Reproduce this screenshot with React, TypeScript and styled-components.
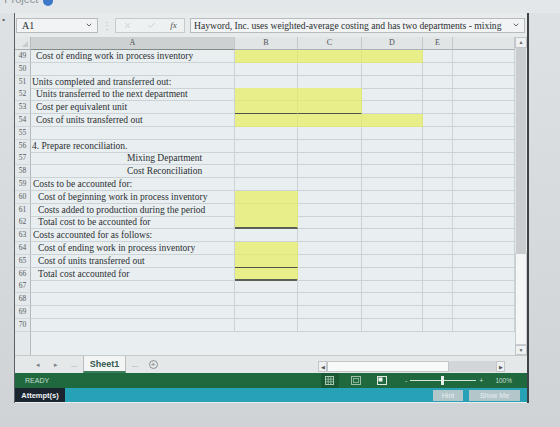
import React from "react";
import styled, { createGlobalStyle } from "styled-components";
import { ChevronDown, X, Check } from "lucide-react";

const GlobalStyle = createGlobalStyle`
  html, body { margin: 0; padding: 0; }
  body {
    background: #d5d8db;
    font-family: "Liberation Serif", "Times New Roman", serif;
  }
  * { box-sizing: border-box; }
`;

// widths of: row numbers, A, B, C, D, E, (unlabelled)
const COLS = "16px 204px 63px 64px 61px 30px 62px";
const LETTERS = ["A", "B", "C", "D", "E", ""];

type Under = "single" | "double";

type RowData = {
  n: number;
  text?: string;
  indent?: number;
  fill?: string[];
  under?: Record<string, Under>;
};

const rows: RowData[] = [
  { n: 49, text: "Cost of ending work in process inventory", indent: 4, fill: ["B", "C", "D"] },
  { n: 50 },
  { n: 51, text: "Units completed and transferred out:", indent: 0 },
  { n: 52, text: "Units transferred to the next department", indent: 4, fill: ["B", "C"] },
  { n: 53, text: "Cost per equivalent unit", indent: 4, fill: ["B", "C"], under: { B: "single", C: "single" } },
  { n: 54, text: "Cost of units transferred out", indent: 4, fill: ["B", "C", "D"] },
  { n: 55 },
  { n: 56, text: "4. Prepare reconciliation.", indent: 0 },
  { n: 57, text: "Mixing Department", indent: 95 },
  { n: 58, text: "Cost Reconciliation", indent: 95 },
  { n: 59, text: "Costs to be accounted for:", indent: 1 },
  { n: 60, text: "Cost of beginning work in process inventory", indent: 6, fill: ["B"] },
  { n: 61, text: "Costs added to production during the period", indent: 6, fill: ["B"], under: { B: "single" } },
  { n: 62, text: "Total cost to be accounted for", indent: 6, fill: ["B"], under: { B: "double" } },
  { n: 63, text: "Costs accounted for as follows:", indent: 1 },
  { n: 64, text: "Cost of ending work in process inventory", indent: 6, fill: ["B"] },
  { n: 65, text: "Cost of units transferred out", indent: 6, fill: ["B"], under: { B: "single" } },
  { n: 66, text: "Total cost accounted for", indent: 6, fill: ["B"], under: { B: "double" } },
  { n: 67 },
  { n: 68 },
  { n: 69 },
  { n: 70 },
];

const Screen = styled.div`
  width: 560px;
  height: 427px;
  overflow: hidden;
  display: flex;
  flex-direction: column;
  background: linear-gradient(#dfe2e4, #d0d3d6);
`;

const TopStrip = styled.div`
  height: 13px;
  overflow: hidden;
  display: flex;
  align-items: flex-end;
  gap: 5px;
  background: #e4e7e9;
`;

const TopTitle = styled.span`
  font-family: "Liberation Sans", Arial, sans-serif;
  font-size: 11px;
  line-height: 11px;
  color: #8c9298;
  margin: 0 0 8px -38px;
  white-space: nowrap;
`;

const TopBadge = styled.span`
  width: 10px;
  height: 10px;
  border-radius: 50%;
  background: #3f78c8;
  margin-bottom: 7px;
`;

const Body = styled.div`
  display: flex;
  height: 390px;
`;

const Gutter = styled.div`
  width: 14px;
  padding: 3px 0 0 2px;
  font-size: 9px;
  line-height: 9px;
  color: #555;
`;

const Frame = styled.div`
  width: 515px;
  display: flex;
  flex-direction: column;
  border-left: 1px solid #5b6066;
  border-right: 2px solid #3e4247;
  background: #e9eef0;
`;

const FormulaBar = styled.div`
  height: 24px;
  display: flex;
  align-items: center;
  padding: 0 2px 0 1px;
  background: #e7ebec;
`;

const InputBox = styled.div<{ $w?: number }>`
  ${(p) => (p.$w ? `width: ${p.$w}px;` : "flex: 1;")}
  height: 15px;
  display: flex;
  align-items: center;
  justify-content: space-between;
  border: 1px solid #b6bbbe;
  background: #f1f3f4;
  padding: 0 4px 0 5px;
  font-size: 10px;
  color: #2c3032;
  white-space: nowrap;
  overflow: hidden;
`;

const Sep = styled.div`
  width: 17px;
  text-align: center;
  font-size: 10px;
  color: #b8bcbf;
`;

const FxBox = styled.div`
  width: 70px;
  height: 15px;
  display: flex;
  align-items: center;
  justify-content: space-around;
  border: 1px solid #c6cacc;
  background: #eef1f2;
  margin-right: 5px;
`;

const Fx = styled.span`
  font-style: italic;
  font-size: 9px;
  color: #555;
`;

const FormulaText = styled.span`
  margin-left: -2px;
  font-size: 9.6px;
`;

const Sheet = styled.div`
  height: 318px;
  display: flex;
`;

const GridCol = styled.div`
  width: 500px;
  display: flex;
  flex-direction: column;
`;

const HeaderRow = styled.div`
  display: grid;
  grid-template-columns: ${COLS};
  height: 13px;
`;

const HeadCell = styled.div<{ $sel?: boolean }>`
  background: ${(p) => (p.$sel ? "#cdd1d2" : "#e1e5e6")};
  border-right: 1px solid #c2c8cb;
  border-bottom: 1px solid ${(p) => (p.$sel ? "#7f8a86" : "#a9afb2")};
  font-size: 8px;
  line-height: 12px;
  text-align: center;
  color: #4d5256;
`;

const Corner = styled.div`
  position: relative;
  background: #e3e7e8;
  border-right: 1px solid #b5bcc0;
  border-bottom: 1px solid #a9afb2;
  &::after {
    content: "";
    position: absolute;
    right: 2px;
    bottom: 2px;
    border-left: 6px solid transparent;
    border-bottom: 6px solid #c6cbcd;
  }
`;

const Row = styled.div`
  display: grid;
  grid-template-columns: ${COLS};
  height: 12.8px;
`;

const RowNum = styled.div`
  font-size: 7.5px;
  line-height: 12px;
  text-align: center;
  color: #555b60;
  background: #e4e9eb;
  border-right: 1px solid #b3babe;
  border-bottom: 1px solid #d0d7da;
`;

const Cell = styled.div<{ $fill?: boolean; $under?: Under; $indent?: number }>`
  background: ${(p) => (p.$fill ? "#e8ef88" : "transparent")};
  border-right: 1px solid ${(p) => (p.$fill ? "#dfe681" : "#cbd3d7")};
  border-bottom: ${(p) =>
    p.$under === "double"
      ? "2px solid #5c5f57"
      : p.$under === "single"
      ? "1px solid #4f524c"
      : `1px solid ${p.$fill ? "#dfe681" : "#cbd3d7"}`};
  padding-left: ${(p) => (p.$indent ?? 0) + 1}px;
  font-size: 9.5px;
  line-height: 12px;
  color: #2b3033;
  white-space: nowrap;
`;

const Filler = styled.div`
  flex: 1;
  display: grid;
  grid-template-columns: ${COLS};
`;

const FillerNum = styled.div`
  border-right: 1px solid #b3babe;
  background: #e4e9eb;
`;

const VScroll = styled.div`
  width: 12px;
  display: flex;
  flex-direction: column;
  background: #e3e6e7;
`;

const ScrollBtn = styled.div<{ $h: number }>`
  height: ${(p) => p.$h}px;
  display: flex;
  align-items: center;
  justify-content: center;
  border: 1px solid #c2c6c9;
  background: #eef0f1;
  font-size: 5px;
  color: #666;
`;

const Thumb = styled.div`
  height: 205px;
  margin: 0 1px;
  background: #c9cdd0;
`;

const Track = styled.div`
  flex: 1;
  background: #f4f5f5;
  border: 1px solid #c9cdd0;
`;

const TabBar = styled.div`
  height: 18px;
  display: flex;
  align-items: stretch;
  padding: 0 22px 0 14px;
  background: #e5e8e9;
  border-top: 1px solid #c6cacd;
`;

const NavBtn = styled.div`
  width: 18px;
  display: flex;
  align-items: center;
  justify-content: center;
  font-family: "Liberation Sans", Arial, sans-serif;
  font-size: 7px;
  color: #7a7f83;
`;

const SheetTab = styled.div`
  width: 43px;
  display: flex;
  align-items: center;
  justify-content: center;
  background: #f3f5f5;
  border-left: 1px solid #b8bdc0;
  border-right: 1px solid #b8bdc0;
  border-bottom: 2px solid #3c7d5c;
  font-family: "Liberation Sans", Arial, sans-serif;
  font-weight: bold;
  font-size: 9px;
  color: #33584c;
`;

const AddCircle = styled.span`
  width: 9px;
  height: 9px;
  border-radius: 50%;
  border: 1px solid #8a8f93;
  display: flex;
  align-items: center;
  justify-content: center;
  font-family: "Liberation Sans", Arial, sans-serif;
  font-size: 8px;
  line-height: 8px;
  color: #777;
`;

const HScroll = styled.div`
  margin-left: auto;
  width: 187px;
  height: 11px;
  align-self: flex-end;
  margin-bottom: 1px;
  display: flex;
`;

const HBtn = styled.div`
  width: 9px;
  display: flex;
  align-items: center;
  justify-content: center;
  border: 1px solid #c2c6c9;
  background: #eef0f1;
  font-size: 5px;
  color: #555;
`;

const HThumb = styled.div`
  width: 122px;
  background: #f8f9f9;
  border: 1px solid #c2c6c9;
`;

const HTrack = styled.div`
  flex: 1;
  background: #d3d6d8;
`;

const StatusBar = styled.div`
  height: 15px;
  display: flex;
  align-items: center;
  padding: 0 15px 0 10px;
  background: #20693f;
  font-family: "Liberation Sans", Arial, sans-serif;
  font-size: 7px;
  color: #c9dfd0;
`;

const Spacer = styled.div`
  flex: 1;
`;

const ViewIcon = styled.div<{ $active?: boolean }>`
  width: 18px;
  height: 15px;
  margin-right: 8px;
  display: flex;
  align-items: center;
  justify-content: center;
  background: ${(p) => (p.$active ? "#1a5934" : "transparent")};
`;

const Zoomer = styled.div`
  display: flex;
  align-items: center;
  gap: 3px;
  margin-left: 6px;
`;

const SliderLine = styled.div`
  position: relative;
  width: 66px;
  height: 1px;
  background: #d2e4d8;
`;

const SliderKnob = styled.div`
  position: absolute;
  left: 31px;
  top: -4px;
  width: 3px;
  height: 9px;
  background: #e6efe9;
`;

const ZoomPct = styled.span`
  margin-left: 12px;
  font-size: 6.5px;
`;

const AttemptBar = styled.div`
  height: 14px;
  display: flex;
  align-items: center;
  padding-right: 7px;
  background: #26a1b5;
  font-family: "Liberation Sans", Arial, sans-serif;
`;

const AttemptBox = styled.div`
  width: 50px;
  height: 100%;
  display: flex;
  align-items: center;
  justify-content: center;
  background: #1b2530;
  color: #f2f4f5;
  font-weight: bold;
  font-size: 7.5px;
`;

const GhostButton = styled.div<{ $w: number }>`
  width: ${(p) => p.$w}px;
  height: 11px;
  margin-left: 6px;
  display: flex;
  align-items: center;
  justify-content: center;
  background: #b3c6ca;
  color: #e9f0f1;
  font-size: 7px;
`;

function GridIcon() {
  return (
    <svg width="9" height="9" viewBox="0 0 9 9">
      <rect x="0.5" y="0.5" width="8" height="8" fill="none" stroke="#a9c9b3" />
      <path d="M3.2 0.5v8M5.8 0.5v8M0.5 3.2h8M0.5 5.8h8" stroke="#a9c9b3" strokeWidth="0.8" />
    </svg>
  );
}

function LayoutIcon() {
  return (
    <svg width="10" height="9" viewBox="0 0 10 9">
      <rect x="0.5" y="0.5" width="9" height="8" fill="none" stroke="#9ebfa9" />
      <rect x="2.5" y="2.5" width="5" height="4" fill="none" stroke="#9ebfa9" strokeWidth="0.8" />
    </svg>
  );
}

function BreakIcon() {
  return (
    <svg width="10" height="9" viewBox="0 0 10 9">
      <rect x="0.5" y="0.5" width="9" height="8" fill="none" stroke="#dfeae3" />
      <rect x="1.5" y="1.5" width="4" height="4" fill="#eef4f0" />
    </svg>
  );
}

function SheetRow({ r }: { r: RowData }) {
  return (
    <Row>
      <RowNum>{r.n}</RowNum>
      <Cell $indent={r.indent}>{r.text}</Cell>
      {LETTERS.slice(1).map((l, i) => (
        <Cell
          key={i}
          $fill={!!l && r.fill?.includes(l)}
          $under={l ? r.under?.[l] : undefined}
        />
      ))}
    </Row>
  );
}

export default function App() {
  return (
    <>
      <GlobalStyle />
      <Screen>
        <TopStrip>
          <TopTitle>Chapter Project</TopTitle>
          <TopBadge />
        </TopStrip>
        <Body>
          <Gutter>•</Gutter>
          <Frame>
            <FormulaBar>
              <InputBox $w={82}>
                <span>A1</span>
                <ChevronDown size={8} color="#666" strokeWidth={3} />
              </InputBox>
              <Sep>⋮</Sep>
              <FxBox>
                <X size={9} color="#c2c6c8" />
                <Check size={9} color="#c2c6c8" />
                <Fx>fx</Fx>
              </FxBox>
              <InputBox>
                <FormulaText>
                  Hayword, Inc. uses weighted-average costing and has two departments - mixing
                </FormulaText>
                <ChevronDown size={8} color="#666" strokeWidth={3} />
              </InputBox>
            </FormulaBar>

            <Sheet>
              <GridCol>
                <HeaderRow>
                  <Corner />
                  {LETTERS.map((l, i) => (
                    <HeadCell key={i} $sel={l === "A"}>
                      {l}
                    </HeadCell>
                  ))}
                </HeaderRow>
                {rows.map((r) => (
                  <SheetRow key={r.n} r={r} />
                ))}
                <Filler>
                  <FillerNum />
                </Filler>
              </GridCol>
              <VScroll>
                <ScrollBtn $h={11}>▲</ScrollBtn>
                <Thumb />
                <Track />
                <ScrollBtn $h={10}>▼</ScrollBtn>
              </VScroll>
            </Sheet>

            <TabBar>
              <NavBtn>◂</NavBtn>
              <NavBtn>▸</NavBtn>
              <NavBtn>...</NavBtn>
              <SheetTab>Sheet1</SheetTab>
              <NavBtn>...</NavBtn>
              <NavBtn>
                <AddCircle>+</AddCircle>
              </NavBtn>
              <HScroll>
                <HBtn>◀</HBtn>
                <HThumb />
                <HTrack />
                <HBtn>▶</HBtn>
              </HScroll>
            </TabBar>

            <StatusBar>
              <span>READY</span>
              <Spacer />
              <ViewIcon $active>
                <GridIcon />
              </ViewIcon>
              <ViewIcon>
                <LayoutIcon />
              </ViewIcon>
              <ViewIcon>
                <BreakIcon />
              </ViewIcon>
              <Zoomer>
                <span>-</span>
                <SliderLine>
                  <SliderKnob />
                </SliderLine>
                <span>+</span>
              </Zoomer>
              <ZoomPct>100%</ZoomPct>
            </StatusBar>

            <AttemptBar>
              <AttemptBox>Attempt(s)</AttemptBox>
              <Spacer />
              <GhostButton $w={30}>Hint</GhostButton>
              <GhostButton $w={51}>Show Me</GhostButton>
            </AttemptBar>
          </Frame>
        </Body>
      </Screen>
    </>
  );
}
